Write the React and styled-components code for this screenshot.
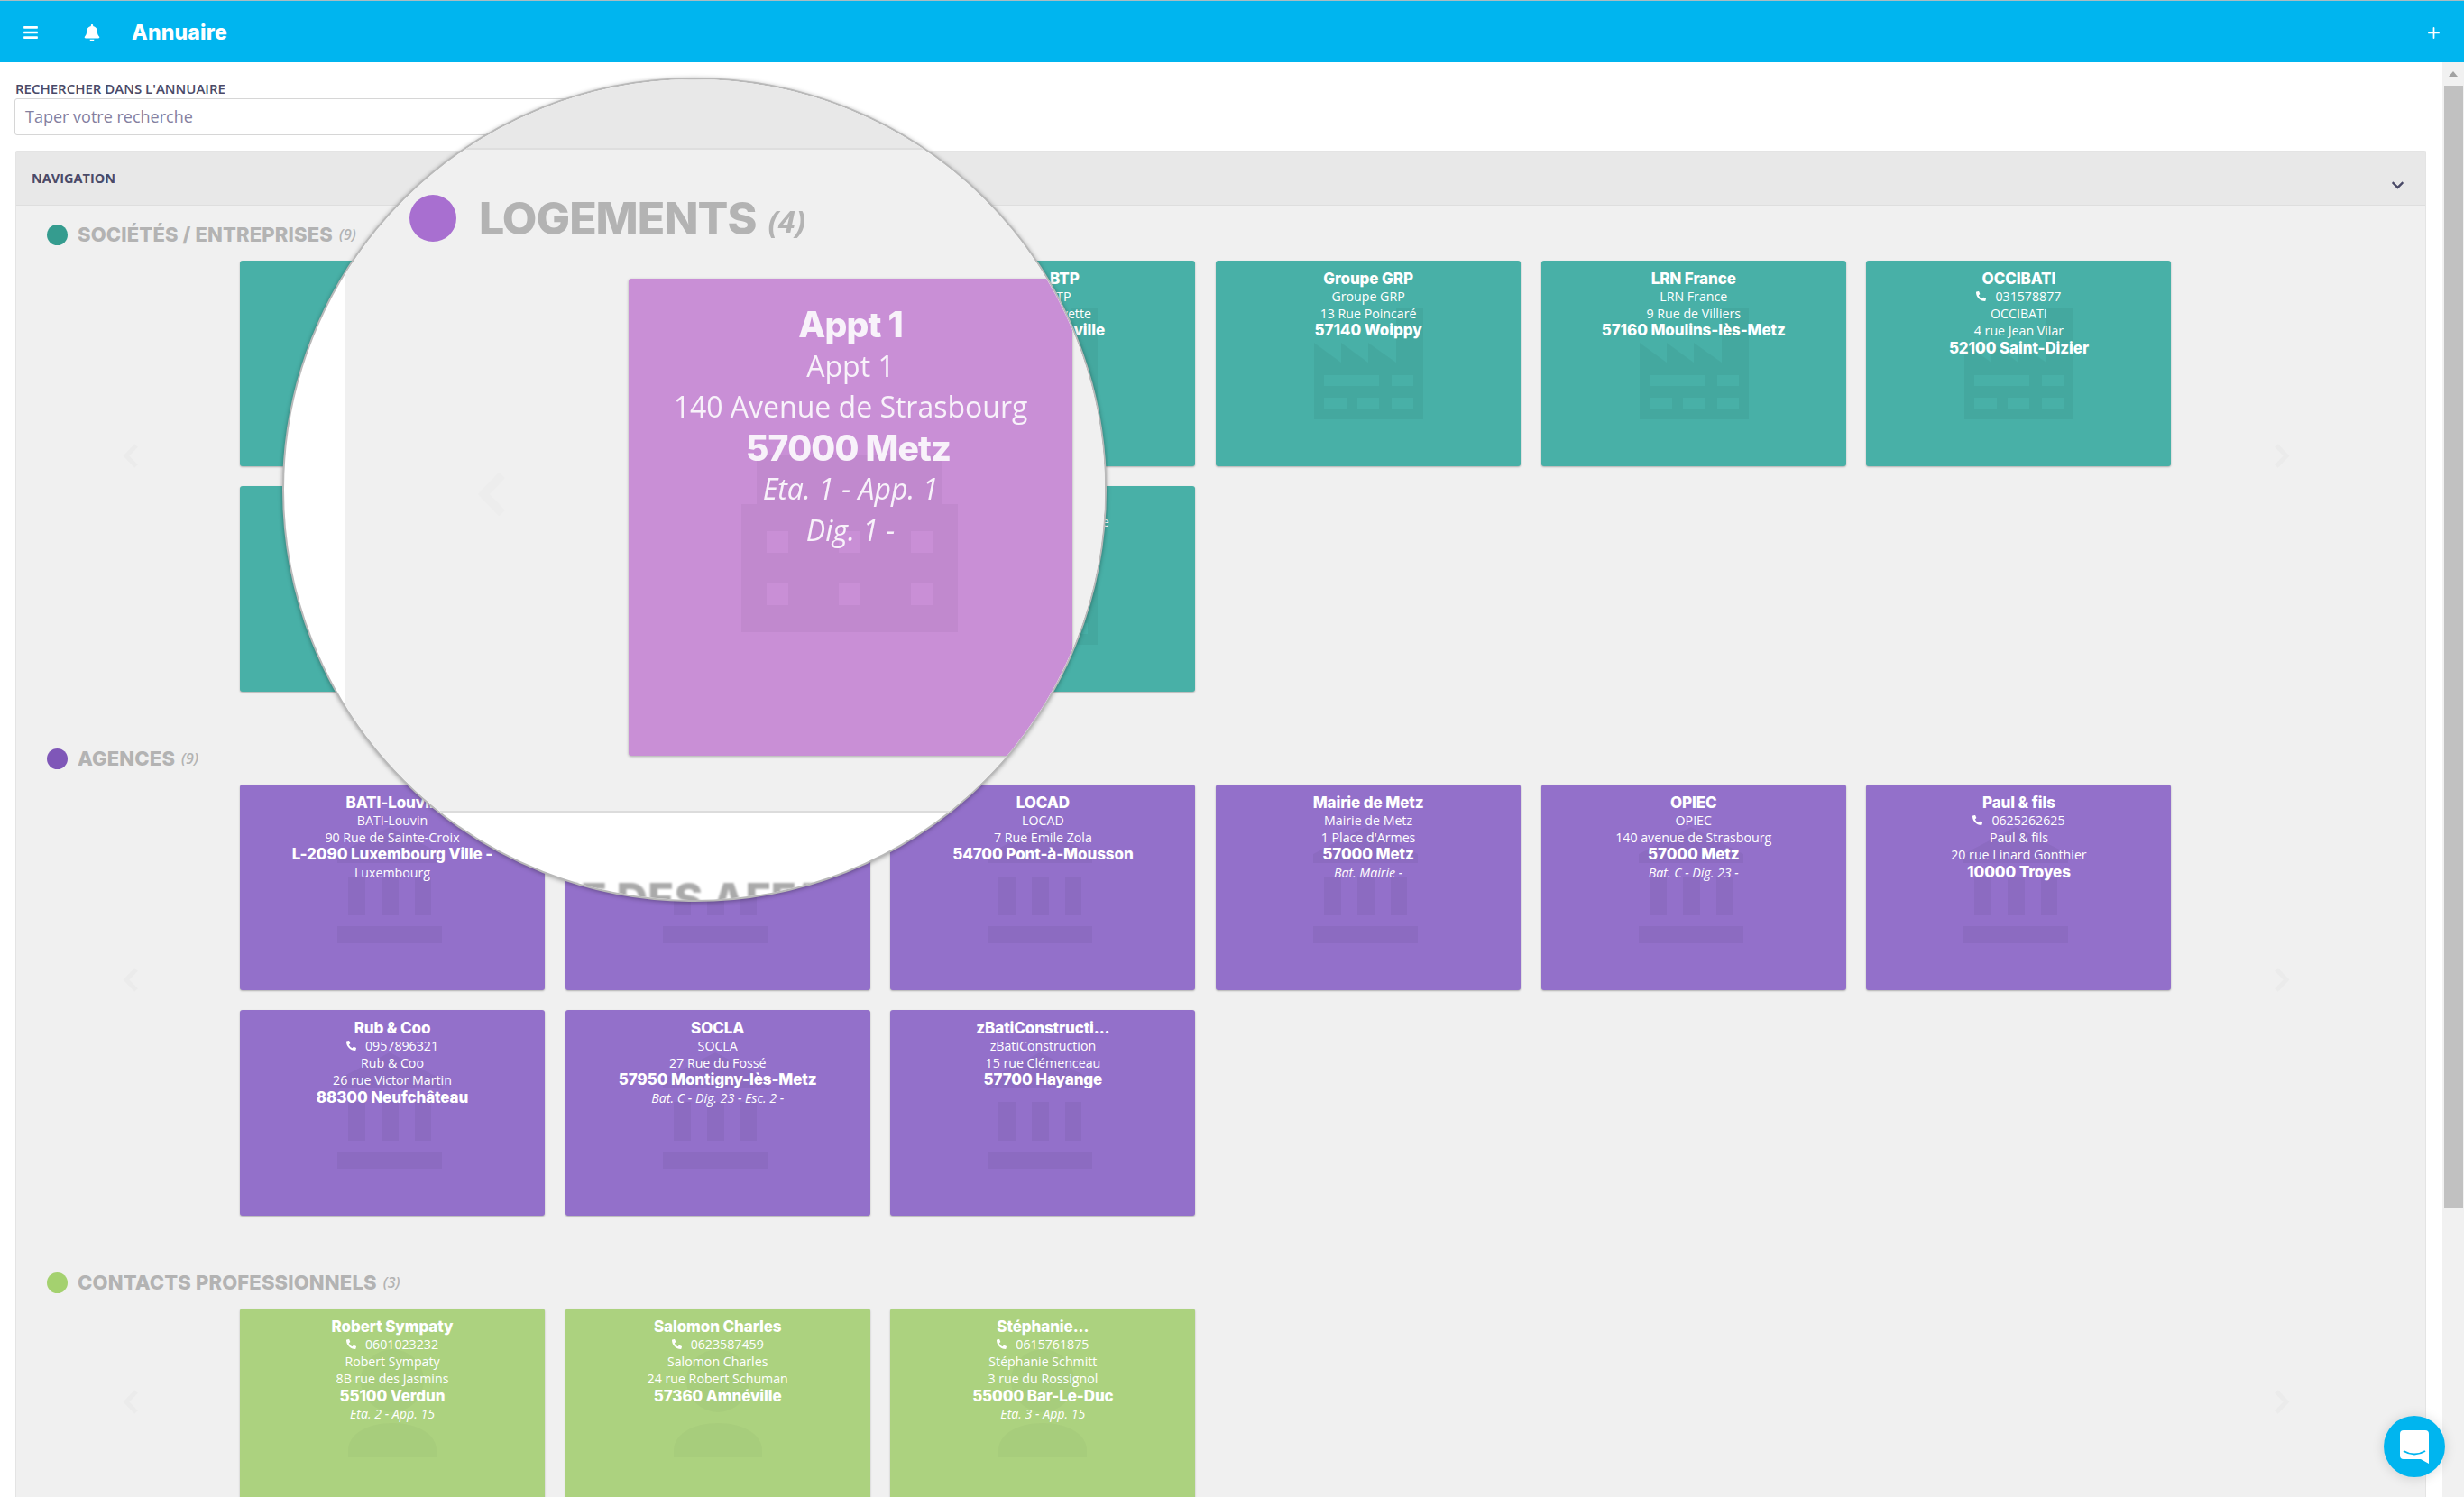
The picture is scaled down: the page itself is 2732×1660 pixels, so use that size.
import React from 'react';
import styled, { createGlobalStyle } from 'styled-components';
import { FaBars, FaBell, FaPhoneAlt, FaChevronDown } from 'react-icons/fa';
import { Plus } from 'lucide-react';

const Global = createGlobalStyle`
  html, body { margin: 0; padding: 0; overflow: hidden; background: #fff; }
  * { box-sizing: border-box; }
`;

const Page = styled.div`
  position: relative;
  width: 2732px;
  height: 1660px;
  overflow: hidden;
  display: flex;
  flex-direction: column;
  font-family: "Open Sans", sans-serif;
`;

const TopBar = styled.header`
  height: 69px;
  flex: none;
  display: flex;
  align-items: center;
  background: #00b5ef;
  border-top: 1px solid #a9bcc2;
  color: #fff;
  padding: 2px 24px 0 25px;
`;

const BarIcon = styled.span`
  display: flex;
  width: ${p => p.$w}px;
  margin-right: ${p => p.$mr}px;
  font-size: ${p => p.$size}px;
`;

const BarTitle = styled.div`
  font-family: Inter, sans-serif;
  font-weight: 800;
  font-size: 23px;
  letter-spacing: 0.2px;
  flex: 1;
`;

const Body = styled.div`
  flex: 1;
  min-height: 0;
  display: flex;
`;

const Content = styled.main`
  flex: 1;
  min-width: 0;
  padding: 18px 18px 0 17px;
  display: flex;
  flex-direction: column;
`;

const SearchLabel = styled.label`
  display: block;
  font-size: 15px;
  line-height: 22px;
  font-weight: 600;
  color: #4a4a68;
`;

const SearchInput = styled.div`
  width: 800px;
  height: 41px;
  margin-left: -1px;
  border: 1px solid #d6d6d6;
  border-radius: 3px;
  padding-left: 11px;
  font-size: 18px;
  line-height: 39px;
  color: #85809f;
`;

const Panel = styled.section`
  margin-top: 17px;
  flex: 1;
  min-height: 0;
  background: #f0f0f0;
  border: 1px solid #e4e4e4;
  border-bottom: 0;
  border-radius: 2px 2px 0 0;
  overflow: hidden;
`;

const PanelHead = styled.div`
  height: 60px;
  display: flex;
  align-items: center;
  justify-content: space-between;
  padding: 0 23px 0 17px;
  background: #e8e8e8;
  border-bottom: 1px solid #dedede;
  font-size: 14.5px;
  font-weight: 700;
  color: #4a4a68;
`;

const HeadChevron = styled(FaChevronDown)`
  font-size: 15px;
  margin-top: 16px;
`;

const Section = styled.div`
  padding-top: 20px;
  height: 581px;
`;

const SectionTitle = styled.h2`
  margin: 0 0 17px;
  padding-left: 34px;
  height: 24px;
  display: flex;
  align-items: center;
  gap: 11px;
  font-family: Inter, sans-serif;
  font-size: 22px;
  font-weight: 800;
  letter-spacing: 0.15px;
  color: #b3b3b3;
`;

const Dot = styled.i`
  width: 23px;
  height: 23px;
  border-radius: 50%;
  background: ${p => p.$color};
`;

const Count = styled.em`
  font-family: "Open Sans", sans-serif;
  font-size: 16px;
  font-weight: 600;
  letter-spacing: 0;
  margin-left: -4px;
`;

const Carousel = styled.div`
  display: grid;
  grid-template-columns: 248px 2160px 1fr;
`;

const ArrowCell = styled.div`
  display: flex;
  align-items: center;
  justify-content: center;
  padding: 0 ${p => p.$side === 'right' ? 56 : 0}px ${p => p.$rows === 2 ? 46 : 22}px ${p => p.$side === 'left' ? 6 : 0}px;
  color: #ebebeb;
`;

const Cards = styled.div`
  display: flex;
  flex-wrap: wrap;
  column-gap: 22.7px;
  row-gap: 22px;
`;

const Card = styled.article`
  position: relative;
  width: 338px;
  height: 228px;
  padding-top: 10.5px;
  border-radius: 3px;
  background: ${p => p.$bg};
  box-shadow: 0 1px 2px rgba(0, 0, 0, 0.28);
  color: #fff;
  text-align: center;
  font-size: 14.2px;
  line-height: 19.3px;
`;

const Watermark = styled.svg`
  position: absolute;
  left: ${p => p.$left}px;
  top: ${p => p.$top}px;
  fill: rgba(0, 0, 0, ${p => p.$alpha || 0.045});
`;

const Line = styled.div`
  position: relative;
  white-space: nowrap;
`;

const Name = styled(Line)`
  font-family: Inter, sans-serif;
  font-weight: 800;
  font-size: 17px;
  letter-spacing: -0.1px;
`;

const City = styled(Line)`
  font-family: Inter, sans-serif;
  font-weight: 800;
  font-size: 17px;
  letter-spacing: -0.1px;
`;

const Note = styled(Line)`
  font-style: italic;
`;

const Phone = styled(Line)`
  display: flex;
  justify-content: center;
  align-items: center;
  gap: 10px;
  svg { font-size: 11px; }
`;

const Scrollbar = styled.aside`
  width: 24px;
  flex: none;
  background: #f1f1f1;
  padding: 10px 1px 0 2px;
`;

const ScrollUp = styled.div`
  width: 0;
  height: 0;
  margin: 0 0 10px 5px;
  border-left: 5.5px solid transparent;
  border-right: 5.5px solid transparent;
  border-bottom: 6px solid #a2a2a2;
`;

const ScrollThumb = styled.div`
  height: 1245px;
  background: #c1c1c1;
`;

const Lens = styled.div`
  position: absolute;
  left: 313px;
  top: 86px;
  width: 914px;
  height: 914px;
  border-radius: 50%;
  overflow: hidden;
  background: #fff;
  border: 2px solid #b9b9b9;
  box-shadow: 0 1px 5px rgba(0, 0, 0, 0.35);
  padding-left: 67px;
`;

const LensPanel = styled.div`
  width: 1000px;
  height: 813px;
  background: #f0f0f0;
  border: 1px solid #e0e0e0;
  border-bottom: 2px solid #dcdcdc;
`;

const LensHead = styled.div`
  height: 77px;
  background: #e8e8e8;
  border-bottom: 2px solid #dedede;
`;

const LensTitle = styled.div`
  margin: 50px 0 41px;
  padding-left: 71px;
  height: 52px;
  display: flex;
  align-items: center;
  gap: 25px;
  font-family: Inter, sans-serif;
  font-weight: 800;
  font-size: 50px;
  letter-spacing: -1px;
  color: #b3b3b3;
  filter: blur(0.5px);
`;

const LensDot = styled.i`
  width: 52px;
  height: 52px;
  border-radius: 50%;
  background: #a86fd0;
`;

const LensCount = styled.em`
  font-family: "Open Sans", sans-serif;
  font-weight: 700;
  font-size: 34px;
  letter-spacing: 0;
  margin-left: -12px;
  margin-top: 6px;
`;

const LensRow = styled.div`
  display: flex;
`;

const LensArrow = styled.div`
  width: 314px;
  display: flex;
  align-items: center;
  justify-content: center;
  padding: 0 0 52px 10px;
  color: #ededed;
`;

const LensCard = styled.article`
  position: relative;
  width: 492px;
  height: 529px;
  padding-top: 28px;
  border-radius: 3px;
  background: #c98fd6;
  box-shadow: 0 1px 3px rgba(0, 0, 0, 0.3);
  color: #f8f2fa;
  text-align: center;
  font-size: 32px;
  line-height: 45.5px;
  filter: blur(0.4px);
`;

const LensName = styled(Line)`
  font-family: Inter, sans-serif;
  font-weight: 800;
  font-size: 39px;
  letter-spacing: -0.8px;
`;

const LensCity = styled(LensName)`
  padding-right: 5px;
`;

const LensNext = styled.div`
  margin: 66px 0 0 211px;
  white-space: nowrap;
  font-family: Inter, sans-serif;
  font-weight: 800;
  font-size: 48px;
  color: #aaaaaa;
  filter: blur(0.8px);
`;

const ChatButton = styled.div`
  position: absolute;
  left: 2643px;
  top: 1570px;
  width: 68px;
  height: 68px;
  border-radius: 50%;
  background: #00b5ef;
  box-shadow: 0 1px 14px rgba(0, 0, 0, 0.14);
  display: flex;
  align-items: center;
  justify-content: center;
`;

const Chevron = ({ dir, w = 18, h = 27 }) => (
  <svg width={w} height={h} viewBox="0 0 18 27" fill="none" stroke="currentColor" strokeWidth="5">
    <path d={dir === 'left' ? 'M15 2 L4 13.5 L15 25' : 'M3 2 L14 13.5 L3 25'} />
  </svg>
);

const Factory = () => (
  <Watermark $left={109} $top={53} width="121" height="123" viewBox="0 0 121 123" fillRule="evenodd">
    <path d="M0 38 L30 60 V38 L60 60 V38 L91 60 V0 H121 V123 H0 Z M11 74 V86 H72 V74 Z M86 74 V86 H110 V74 Z M11 99 V111 H36 V99 Z M48 99 V111 H72 V99 Z M86 99 V111 H110 V99 Z" />
  </Watermark>
);

const Bank = () => (
  <Watermark $left={108} $top={47} width="116" height="129" viewBox="0 0 116 129">
    <path d="M58 0 L116 30 V40 H0 V30 Z M12 55 H31 V98 H12 Z M49 55 H68 V98 H49 Z M86 55 H104 V98 H86 Z M0 110 H116 V129 H0 Z" />
  </Watermark>
);

const Person = () => (
  <Watermark $left={120} $top={45} width="98" height="120" viewBox="0 0 98 120" $alpha={0.025}>
    <circle cx="49" cy="35" r="35" />
    <path d="M0 120 V112 C0 95 20 82 49 82 C78 82 98 95 98 112 V120 Z" />
  </Watermark>
);

const kinds = {
  company: { bg: '#48b0a7', dot: '#359c8f', Icon: Factory },
  agency: { bg: '#9370ca', dot: '#7f57b8', Icon: Bank },
  contact: { bg: '#acd27f', dot: '#a4d16f', Icon: Person },
};

const sections = [
  {
    kind: 'company',
    title: 'SOCIÉTÉS / ENTREPRISES',
    count: 9,
    rows: 2,
    items: [
      {},
      {},
      { name: 'SARL BTP', lines: ['SARL BTP', '12 rue Lafayette'], city: '57100 Thionville' },
      { name: 'Groupe GRP', lines: ['Groupe GRP', '13 Rue Poincaré'], city: '57140 Woippy' },
      { name: 'LRN France', lines: ['LRN France', '9 Rue de Villiers'], city: '57160 Moulins-lès-Metz' },
      { name: 'OCCIBATI', phone: '031578877', lines: ['OCCIBATI', '4 rue Jean Vilar'], city: '52100 Saint-Dizier' },
      {},
      {},
      { name: '\u00a0', lines: ['Entreprise de la Vallée'] },
    ],
  },
  {
    kind: 'agency',
    title: 'AGENCES',
    count: 9,
    rows: 2,
    items: [
      { name: 'BATI-Louvin', lines: ['BATI-Louvin', '90 Rue de Sainte-Croix'], city: 'L-2090 Luxembourg Ville -', after: 'Luxembourg' },
      {},
      { name: 'LOCAD', lines: ['LOCAD', '7 Rue Emile Zola'], city: '54700 Pont-à-Mousson' },
      { name: 'Mairie de Metz', lines: ['Mairie de Metz', "1 Place d'Armes"], city: '57000 Metz', note: 'Bat. Mairie -' },
      { name: 'OPIEC', lines: ['OPIEC', '140 avenue de Strasbourg'], city: '57000 Metz', note: 'Bat. C - Dig. 23 -' },
      { name: 'Paul & fils', phone: '0625262625', lines: ['Paul & fils', '20 rue Linard Gonthier'], city: '10000 Troyes' },
      { name: 'Rub & Coo', phone: '0957896321', lines: ['Rub & Coo', '26 rue Victor Martin'], city: '88300 Neufchâteau' },
      { name: 'SOCLA', lines: ['SOCLA', '27 Rue du Fossé'], city: '57950 Montigny-lès-Metz', note: 'Bat. C - Dig. 23 - Esc. 2 -' },
      { name: 'zBatiConstructi...', lines: ['zBatiConstruction', '15 rue Clémenceau'], city: '57700 Hayange' },
    ],
  },
  {
    kind: 'contact',
    title: 'CONTACTS PROFESSIONNELS',
    count: 3,
    rows: 1,
    items: [
      { name: 'Robert Sympaty', phone: '0601023232', lines: ['Robert Sympaty', '8B rue des Jasmins'], city: '55100 Verdun', note: 'Eta. 2 - App. 15' },
      { name: 'Salomon Charles', phone: '0623587459', lines: ['Salomon Charles', '24 rue Robert Schuman'], city: '57360 Amnéville' },
      { name: 'Stéphanie...', phone: '0615761875', lines: ['Stéphanie Schmitt', '3 rue du Rossignol'], city: '55000 Bar-Le-Duc', note: 'Eta. 3 - App. 15' },
    ],
  },
];

const EntryCard = ({ kind, item }) => {
  const { bg, Icon } = kinds[kind];
  return (
    <Card $bg={bg}>
      <Icon />
      {item.name && <Name>{item.name}</Name>}
      {item.phone && <Phone><FaPhoneAlt />{item.phone}</Phone>}
      {item.lines && item.lines.map(l => <Line key={l}>{l}</Line>)}
      {item.city && <City>{item.city}</City>}
      {item.after && <Line>{item.after}</Line>}
      {item.note && <Note>{item.note}</Note>}
    </Card>
  );
};

const Magnifier = () => (
  <Lens>
    <LensPanel>
      <LensHead />
      <LensTitle>
        <LensDot />
        LOGEMENTS
        <LensCount>(4)</LensCount>
      </LensTitle>
      <LensRow>
        <LensArrow><Chevron dir="left" w={33} h={60} /></LensArrow>
        <LensCard>
          <Watermark $left={125} $top={195} $alpha={0.035} width="240" height="197" viewBox="0 0 240 197" fillRule="evenodd">
            <path d="M17 0 H223 V55 H240 V197 H0 V55 H17 Z M28 85 V109 H52 V85 Z M108 85 V109 H132 V85 Z M188 85 V109 H212 V85 Z M28 143 V167 H52 V143 Z M108 143 V167 H132 V143 Z M188 143 V167 H212 V143 Z" />
          </Watermark>
          <LensName>Appt 1</LensName>
          <Line>Appt 1</Line>
          <Line>140 Avenue de Strasbourg</Line>
          <LensCity>57000 Metz</LensCity>
          <Note>Eta. 1 - App. 1</Note>
          <Note>Dig. 1 -</Note>
        </LensCard>
      </LensRow>
    </LensPanel>
    <LensNext>VIE DES AFFAIRES</LensNext>
  </Lens>
);

export default function App() {
  return (
    <Page>
      <Global />
      <TopBar>
        <BarIcon $w={18} $mr={50} $size={18}><FaBars /></BarIcon>
        <BarIcon $w={18} $mr={35} $size={19}><FaBell /></BarIcon>
        <BarTitle>Annuaire</BarTitle>
        <Plus size={19} strokeWidth={2.2} />
      </TopBar>
      <Body>
        <Content>
          <SearchLabel>RECHERCHER DANS L'ANNUAIRE</SearchLabel>
          <SearchInput>Taper votre recherche</SearchInput>
          <Panel>
            <PanelHead>
              NAVIGATION
              <HeadChevron />
            </PanelHead>
            {sections.map(s => (
              <Section key={s.title}>
                <SectionTitle>
                  <Dot $color={kinds[s.kind].dot} />
                  {s.title}
                  <Count>({s.count})</Count>
                </SectionTitle>
                <Carousel>
                  <ArrowCell $side="left" $rows={s.rows}><Chevron dir="left" /></ArrowCell>
                  <Cards>
                    {s.items.map((item, i) => <EntryCard key={i} kind={s.kind} item={item} />)}
                  </Cards>
                  <ArrowCell $side="right" $rows={s.rows}><Chevron dir="right" /></ArrowCell>
                </Carousel>
              </Section>
            ))}
          </Panel>
        </Content>
        <Scrollbar>
          <ScrollUp />
          <ScrollThumb />
        </Scrollbar>
      </Body>
      <Magnifier />
      <ChatButton>
        <svg width="32" height="37" viewBox="0 0 32 37">
          <path d="M4 0 H28 Q32 0 32 4 V37 L23 32 H4 Q0 32 0 28 V4 Q0 0 4 0 Z" fill="#fff" />
          <path d="M4 23 Q16 30 28 23" fill="none" stroke="#00b5ef" strokeWidth="2" />
        </svg>
      </ChatButton>
    </Page>
  );
}
